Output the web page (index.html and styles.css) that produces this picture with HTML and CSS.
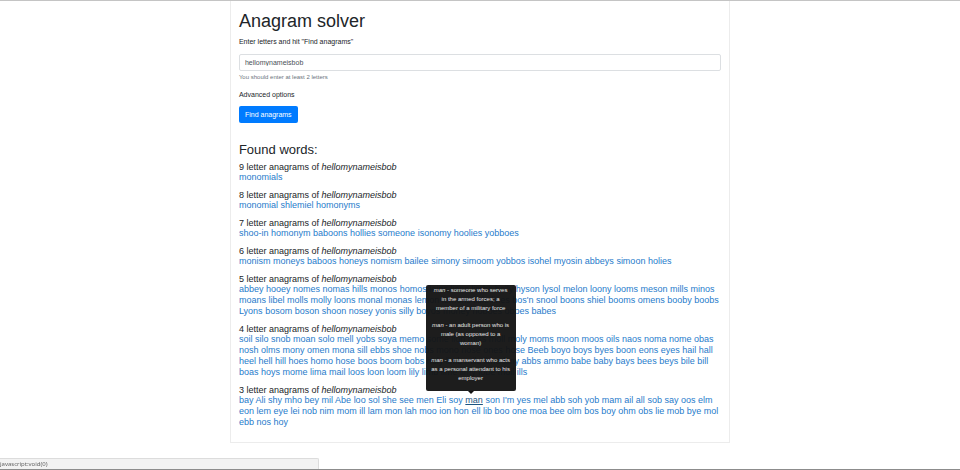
FILE: index.html
```html
<!DOCTYPE html>
<html lang="en">
<head>
<meta charset="utf-8">
<title>Anagram solver</title>
<link rel="stylesheet" href="styles.css">
</head>
<body>
<main class="card">
  <h1>Anagram solver</h1>
  <form class="solver">
    <label for="letters">Enter letters and hit "Find anagrams"</label>
    <input id="letters" type="text" value="hellomynameisbob">
    <small>You should enter at least 2 letters</small>
    <p class="advanced">Advanced options</p>
    <button type="button">Find anagrams</button>
  </form>
  <h2>Found words:</h2>
  <div id="results"></div>
</main>
<div class="status">javascript:void(0)</div>
<script src="words.js"></script>
</body>
</html>
```
FILE: styles.css
```css
* { box-sizing: border-box; }
body {
  margin: 0;
  min-height: 100vh;
  border-top: 1px solid #c4c4c4;
  border-bottom: 1px solid #8c8c8c;
  background: #fff;
  color: #212529;
  font: 9px/11px "Liberation Sans", Arial, sans-serif;
}
.card {
  width: 52.1%;
  margin: 0 auto;
  padding: 9px 8px 7px;
  border: 1px solid #ececec;
  border-top: 0;
}
h1, h2 { margin: 0; font-weight: 400; }
h1 { font-size: 18px; line-height: 22px; }
.solver {
  display: flex;
  flex-direction: column;
  align-items: flex-start;
  font-size: 7px;
}
.solver label { margin-top: 4px; }
.solver input {
  width: 100%;
  height: 17px;
  margin: 7px 0 0;
  padding: 0 5px;
  border: 1px solid #dcdfe2;
  border-radius: 2px;
  background: #fff;
  color: #495057;
  font: inherit;
}
.solver small { margin-top: 1px; color: #6c757d; font-size: 6px; }
.advanced { margin: 6px 0; }
.solver button {
  height: 17px;
  padding: 0 6px;
  border: 0;
  border-radius: 2px;
  background: #007bff;
  color: #fff;
  font: inherit;
}
h2 { margin: 19px 0 4px; font-size: 13px; line-height: 16px; }
.group { margin: 0 0 7px; }
.group h3 { margin: 0; font: inherit; line-height: 10px; }
.group p { margin: 0; }
a { color: #1f7bcb; text-decoration: none; }
.anchor { position: relative; display: inline-block; }
.active { color: #1c5482; text-decoration: underline; }
.tooltip {
  position: absolute;
  bottom: 15px;
  left: 30%;
  width: 90px;
  padding: 1px 5px 8px;
  transform: translateX(-50%);
  border-radius: 2px;
  background: rgba(20, 20, 20, 0.96);
  color: #e6e6e6;
  font-size: 6px;
  line-height: 9px;
  text-align: center;
}
.tooltip::after {
  content: "";
  position: absolute;
  top: 100%;
  left: 50%;
  margin-left: -3px;
  border: 3px solid transparent;
  border-top-color: #141414;
  border-bottom: 0;
}
.tooltip span { display: block; }
.tooltip span + span { margin-top: 8px; }
.status {
  position: fixed;
  left: 0;
  bottom: 1px;
  width: 319px;
  height: 11px;
  border: 1px solid #dcdcdc;
  border-width: 1px 1px 0 0;
  border-radius: 0 2px 0 0;
  background: #f2f2f2;
  color: #666;
  font: 6px/10px "Noto Sans", sans-serif;
}
```
FILE: words.js
```js
const letters = "hellomynameisbob";

const groups = [
  [9, "monomials"],
  [8, "monomial shlemiel homonyms"],
  [7, "shoo-in homonym baboons hollies someone isonomy hoolies yobboes"],
  [6, "monism moneys baboos honeys nomism bailee simony simoom yobbos isohel myosin abbeys simoon holies"],
  [5, "abbey hooey nomes nomas hills monos homos loins lions limbs holly hyson lysol melon loony looms meson mills minos moans libel molls molly loons monal monas lemon lemons lisle lines bos'n snool boons shiel booms omens booby boobs Lyons bosom boson shoon nosey yonis silly boyos money hoboes oboes babes"],
  [4, "soil silo snob moan solo mell yobs soya memo some lion miss moll moly moms moon moos oils naos noma nome obas nosh olms mony omen mona sill ebbs shoe nobs mono nose ones hose Beeb boyo boys byes boon eons eyes hail hall heel hell hill hoes homo hose boos boom bobs holy limb mile lime limy abbs ammo babe baby bays bees beys bile bill boas hoys mome lima mail loos loon loom lily limb lime limy lobe moil ills"],
  [3, "bay Ali shy mho bey mil Abe loo sol she see men Eli soy man son I'm yes mel abb soh yob mam ail all sob say oos elm eon lem eye lei nob nim mom ill lam mon lah moo ion hon ell lib boo one moa bee olm bos boy ohm obs lie mob bye mol ebb nos hoy"]
];

const definitions = [
  "someone who serves in the armed forces; a member of a military force",
  "an adult person who is male (as opposed to a woman)",
  "a manservant who acts as a personal attendant to his employer"
];

const tooltip = `<span class="tooltip" role="tooltip" id="meaning">${definitions
  .map(text => `<span><i>man</i> - ${text}</span>`).join("")}</span>`;

const link = word => word === "man"
  ? `<span class="anchor"><a class="active" href="#" aria-describedby="meaning">man</a>${tooltip}</span>`
  : `<a href="#">${word}</a>`;

document.getElementById("results").innerHTML = groups.map(([size, words]) => `
  <section class="group">
    <h3>${size} letter anagrams of <i>${letters}</i></h3>
    <p>${words.split(" ").map(link).join(" ")}</p>
  </section>`).join("");
```
